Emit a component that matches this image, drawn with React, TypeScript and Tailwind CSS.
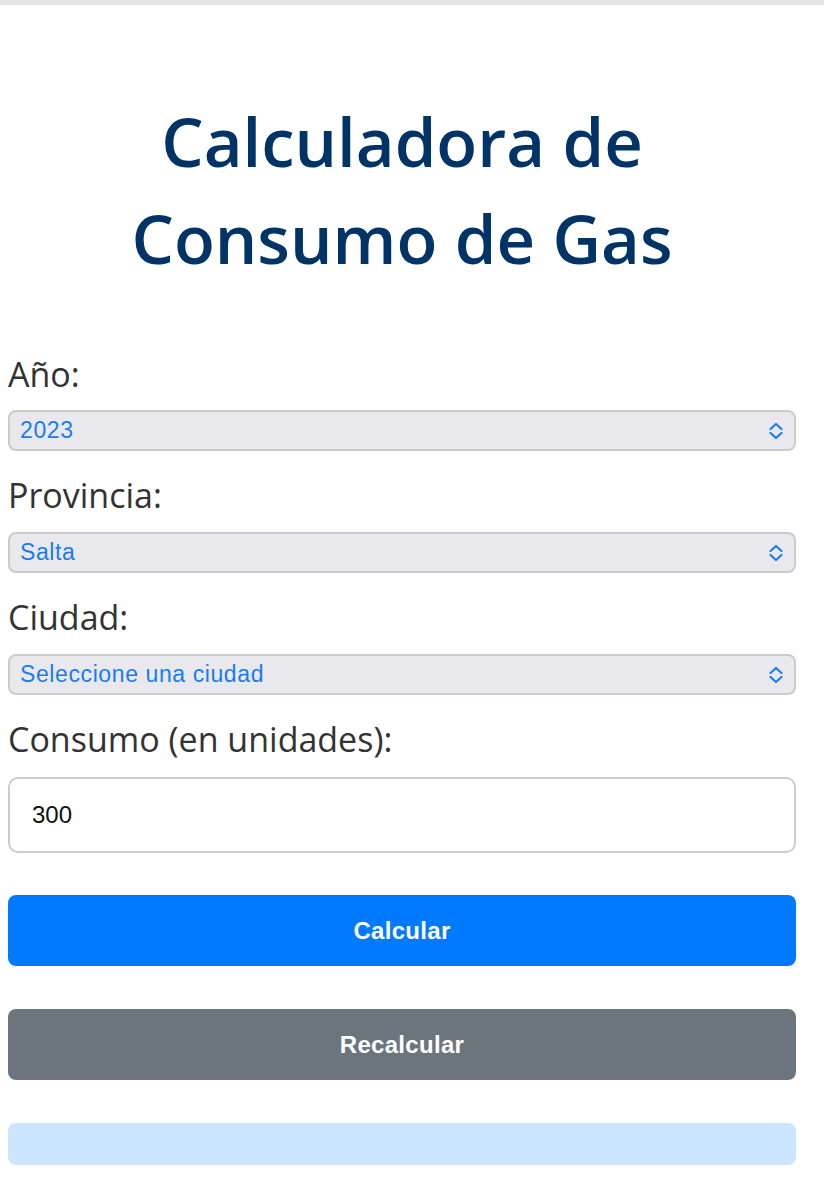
import React from "react";

const Chevron = () => (
  <svg width="16" height="18" viewBox="0 0 16 18" fill="none" className="shrink-0">
    <path d="M2.5 7 8 2l5.5 5M2.5 11 8 16l5.5-5" stroke="#1a7cf0" strokeWidth="2.2" strokeLinecap="round" strokeLinejoin="round" />
  </svg>
);

const SelectBox = ({ value }: { value: string }) => (
  <div className="flex h-[41px] items-center justify-between rounded-[8px] border-2 border-[#cbcbcf] bg-[#e9e9ed] pl-[10px] pr-[10px]">
    <span className="text-[23px] tracking-[0.6px] text-[#1a7cf0] font-['Liberation_Sans',Arial,sans-serif]">{value}</span>
    <Chevron />
  </div>
);

const Label = ({ children, className = "" }: { children: React.ReactNode; className?: string }) => (
  <div className={`text-[34px] leading-[44px] text-[#333333] font-['Open_Sans',sans-serif] ${className}`}>{children}</div>
);

export default function App() {
  return (
    <div className="min-h-[1200px] bg-white">
      <div className="h-[5px] bg-[#e4e4e4]" />
      <div className="ml-2 w-[788px]">
        <h1 className="mt-[88px] text-center text-[67px] font-semibold leading-[97px] text-[#003366] font-['Open_Sans',sans-serif]">
          Calculadora de
          <br />
          Consumo de Gas
        </h1>

        <Label className="mt-[65px]">Año:</Label>
        <div className="mt-[14px]"><SelectBox value="2023" /></div>

        <Label className="mt-[22px]">Provincia:</Label>
        <div className="mt-[15px]"><SelectBox value="Salta" /></div>

        <Label className="mt-[22px]">Ciudad:</Label>
        <div className="mt-[15px]"><SelectBox value="Seleccione una ciudad" /></div>

        <Label className="mt-[22px]">Consumo (en unidades):</Label>
        <div className="mt-[16px] flex h-[76px] items-center rounded-[10px] border-2 border-[#cccccc] bg-white pl-[22px]">
          <span className="text-[24px] text-[#111] font-['Liberation_Sans',Arial,sans-serif]">300</span>
        </div>

        <button className="mt-[42px] flex h-[71px] w-full items-center justify-center rounded-[8px] bg-[#007bff] text-[24px] font-bold tracking-[0.3px] text-white font-['Liberation_Sans',Arial,sans-serif]">
          Calcular
        </button>
        <button className="mt-[43px] flex h-[71px] w-full items-center justify-center rounded-[8px] bg-[#6c757d] text-[24px] font-bold tracking-[0.3px] text-white font-['Liberation_Sans',Arial,sans-serif]">
          Recalcular
        </button>
        <div className="mt-[43px] h-[42px] rounded-[8px] bg-[#cce5ff]" />
      </div>
    </div>
  );
}
